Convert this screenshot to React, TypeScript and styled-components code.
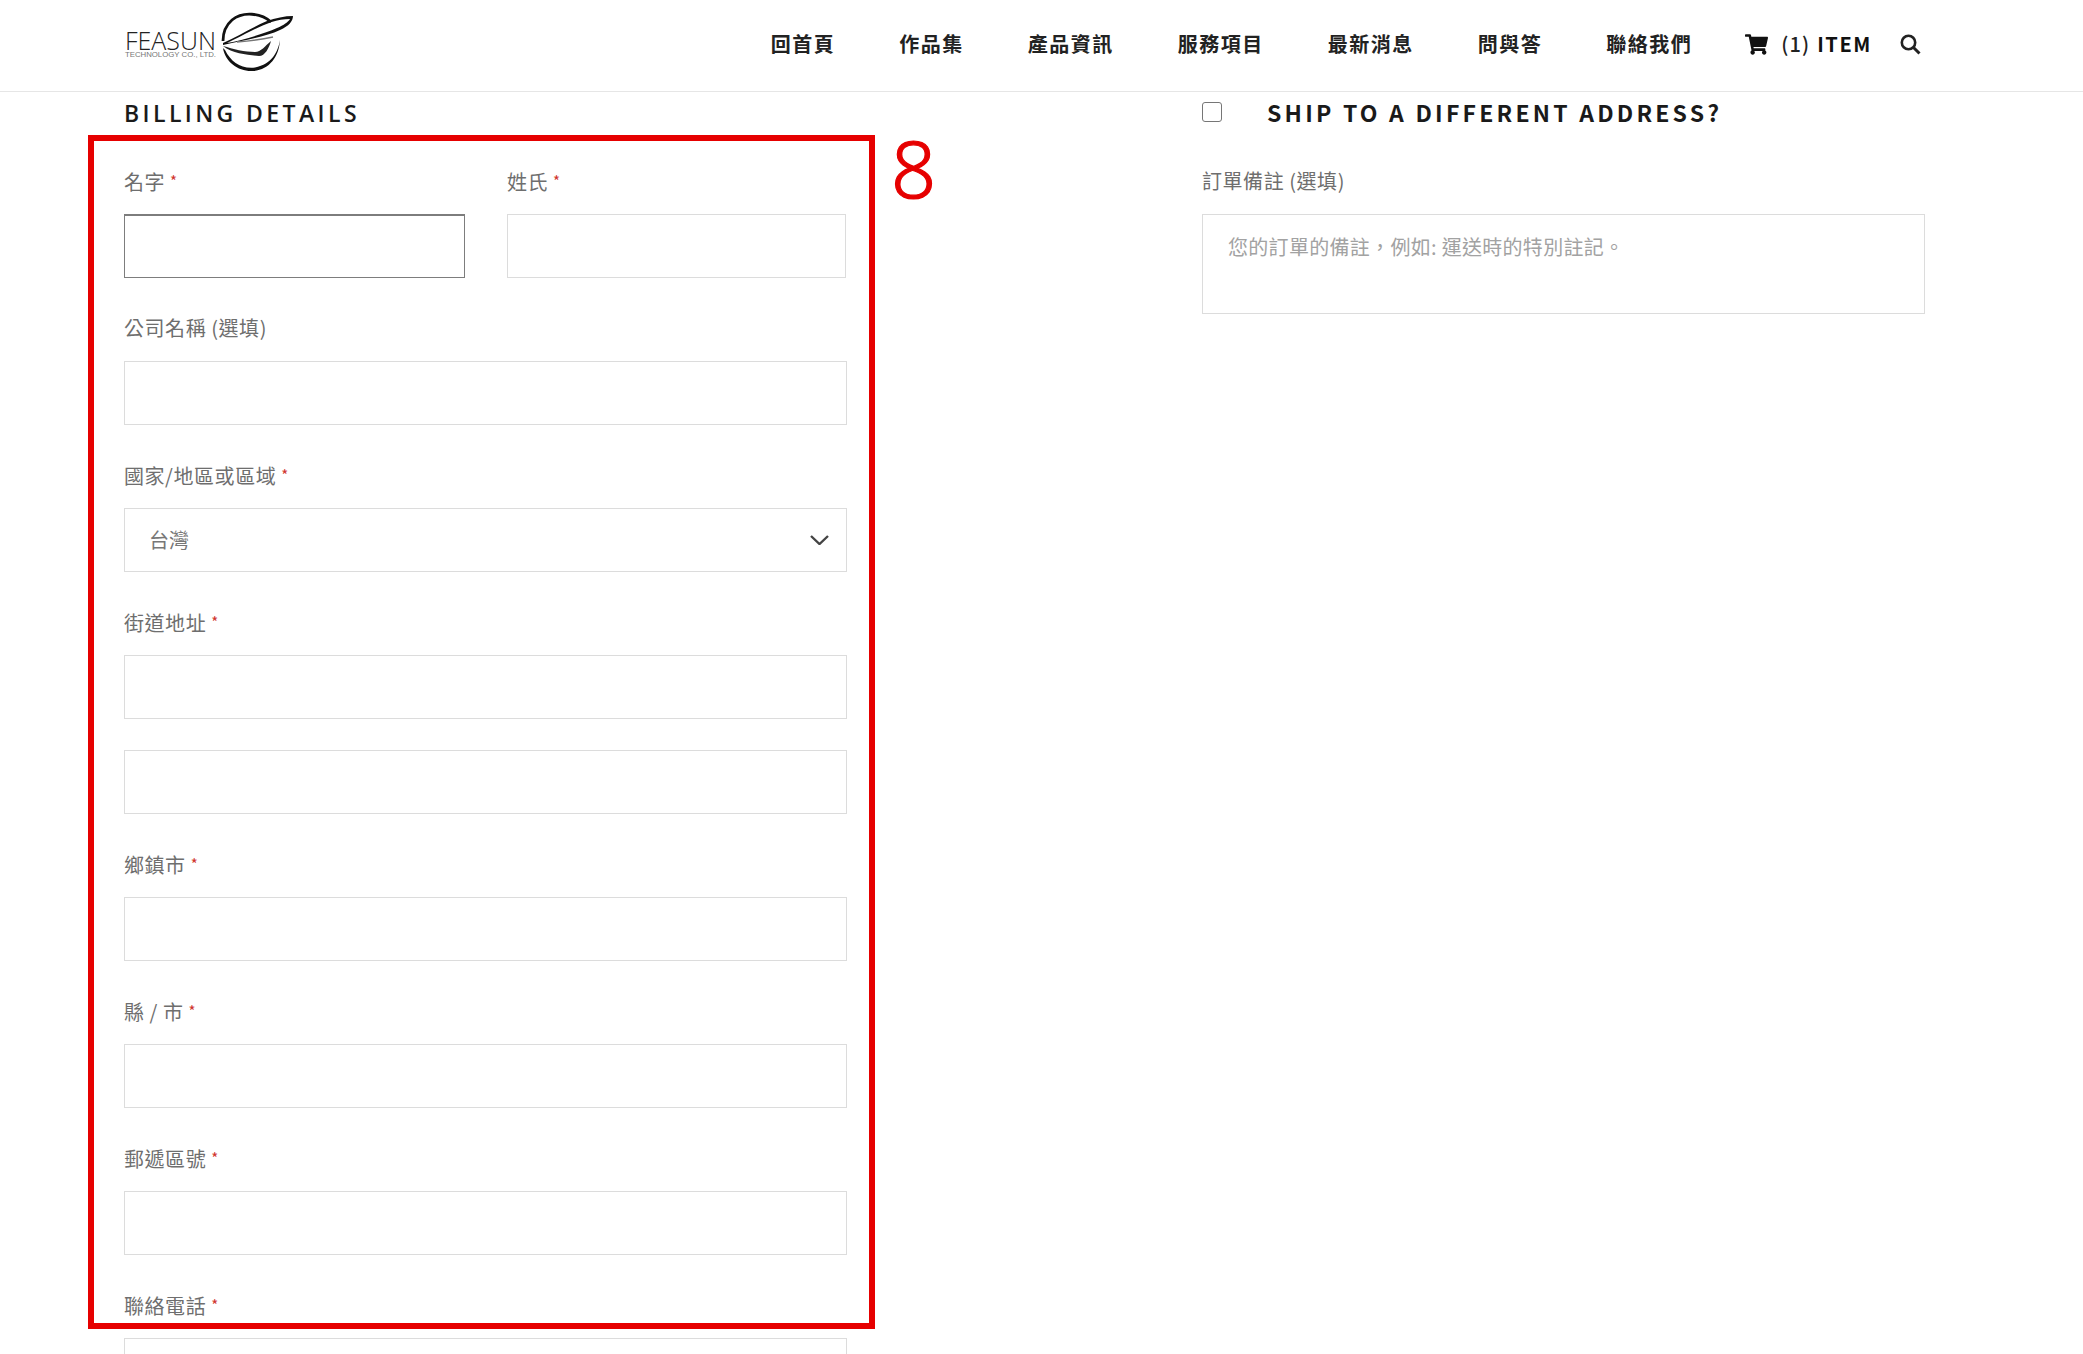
import React from "react";
import styled, { createGlobalStyle } from "styled-components";
import { FaShoppingCart } from "react-icons/fa";

const Global = createGlobalStyle`
  html, body { margin: 0; padding: 0; height: 100%; overflow: hidden; background: #fff; }
  * { box-sizing: border-box; }
  body { font-family: "Noto Sans CJK TC", "Noto Sans", sans-serif; }
`;

const Page = styled.div`
  position: relative;
  height: 1354px;
  overflow: hidden;
  background: #fff;
`;

const Header = styled.header`
  height: 92px;
  border-bottom: 1px solid #e6e6e6;
  padding: 0 162px 0 124px;
  display: flex;
  align-items: center;
  justify-content: space-between;
`;

const LogoSvg = styled.svg`
  display: block;
  width: 170px;
  height: 62px;
  margin-top: -5px;
`;

const Nav = styled.nav`
  display: flex;
  align-items: center;
  gap: 64px;
  margin-top: -3px;
`;

const NavLink = styled.a`
  font-size: 20px;
  line-height: 28px;
  font-weight: 700;
  letter-spacing: 1.5px;
  color: #222;
  white-space: nowrap;
`;

const Cart = styled.div`
  display: flex;
  align-items: center;
  gap: 13px;
  margin-left: -11px;
  color: #111;
  font-size: 20px;
  line-height: 28px;
  white-space: nowrap;
`;

const CartCount = styled.span`
  letter-spacing: 1.2px;
  color: #222;
  font-weight: 500;
  b { font-weight: 700; color: #111; letter-spacing: 1.6px; margin-left: 1px; }
`;

const SearchIcon = styled.svg`
  display: block;
  width: 21px;
  height: 21px;
  margin-left: -36px;
`;

const Columns = styled.main`
  display: grid;
  grid-template-columns: 722.5px 722.5px;
  column-gap: 355.5px;
  padding-left: 124px;
`;

const Heading = styled.h3`
  margin: 0 0 32px;
  height: 44px;
  font-family: "Open Sans", "Noto Sans", sans-serif;
  font-size: 23px;
  line-height: 42px;
  font-weight: 600;
  letter-spacing: 3.4px;
  color: #1a1a1a;
`;

const ShipHeading = styled(Heading)`
  display: flex;
  align-items: flex-start;
  font-family: "Noto Sans CJK TC", sans-serif;
  font-size: 23px;
  line-height: 40px;
  font-weight: 700;
  letter-spacing: 3.2px;
`;

const ShipBox = styled.input`
  appearance: none;
  width: 20px;
  height: 20px;
  margin: 10px 45px 0 0;
  flex: none;
  border: 1px solid #767676;
  border-radius: 3px;
  background: #fff;
`;

const Row = styled.div`
  display: grid;
  grid-template-columns: 341px 339px;
  column-gap: 42px;
`;

const Field = styled.div`
  margin-bottom: 37px;
`;

const Label = styled.label`
  display: block;
  height: 28px;
  margin-bottom: 18px;
  font-size: 20px;
  line-height: 26px;
  letter-spacing: 0.55px;
  color: #6e6e6e;
  white-space: nowrap;
`;

const Star = styled.span`
  margin-left: 5px;
  font-size: 15px;
  vertical-align: 3px;
  color: #d0342c;
`;

const TextInput = styled.input<{ $focused?: boolean }>`
  display: block;
  width: 100%;
  height: 64px;
  padding: 0 25px;
  border: 1px solid ${(p) => (p.$focused ? "#7d7d7d" : "#dcdcdc")};
  border-width: ${(p) => (p.$focused ? "2px 1px 1px" : "1px")};
  border-radius: 0;
  outline: none;
  background: #fff;
  font: inherit;
`;

const SecondLine = styled(TextInput)`
  margin-top: 31px;
`;

const SelectWrap = styled.div`
  position: relative;
`;

const Select = styled.select`
  display: block;
  width: 100%;
  height: 64px;
  padding: 0 24px 2px;
  appearance: none;
  border: 1px solid #dcdcdc;
  border-radius: 0;
  background: #fff;
  font-family: inherit;
  font-size: 20px;
  color: #777;
`;

const Chevron = styled.svg`
  position: absolute;
  right: 18px;
  top: 27px;
  width: 19px;
  height: 10px;
  pointer-events: none;
`;

const NotesArea = styled.textarea`
  display: block;
  width: 100%;
  height: 100px;
  padding: 18px 25px;
  border: 1px solid #dcdcdc;
  border-radius: 0;
  outline: none;
  resize: none;
  font-family: inherit;
  font-size: 20px;
  line-height: 28px;
  letter-spacing: 0.3px;
  &::placeholder { color: #a2a2a2; opacity: 1; }
`;

const Annotation = styled.div`
  position: absolute;
  left: 88px;
  top: 135px;
  width: 787px;
  height: 1194px;
  border: 6.5px solid #e60000;
  pointer-events: none;
`;

const AnnotationNumber = styled.span`
  position: absolute;
  left: 891px;
  top: 122px;
  font-family: "Noto Sans", sans-serif;
  font-weight: 300;
  font-size: 79px;
  line-height: 92px;
  color: #e60000;
  -webkit-text-stroke: 1.2px #e60000;
`;

function Req({ children }: { children: React.ReactNode }) {
  return (
    <Label>
      {children}
      <Star>*</Star>
    </Label>
  );
}

function Logo() {
  return (
    <LogoSvg viewBox="-1 0 170 62" aria-label="FEASUN">
      <text x="0" y="38" fontFamily="Open Sans, sans-serif" fontWeight="300" fontSize="25" textLength="91" lengthAdjust="spacingAndGlyphs" fill="#222">FEASUN</text>
      <text x="0" y="44.5" fontFamily="Liberation Sans, sans-serif" fontSize="6.5" textLength="91" lengthAdjust="spacingAndGlyphs" fill="#777">TECHNOLOGY CO., LTD.</text>
      <path d="M146 10 C136 1 118 -1 107 8 C100 14 98 22 98 29" fill="none" stroke="#111" strokeWidth="2.8" />
      <path d="M98 36 C100 50 114 60 128 59 C144 58 154 45 155 28 C153 40 147 52 130 55.5 C116 57 106 50 100 38 Z" fill="#111" />
      <path d="M98 31 C112 25 124 17 142 9 C150 6 160 4 168 4 C168 9 164 14 155 18 C140 25 116 29 98 33 Z M102 31 C118 28 138 22 152 16 C159 13 163 10 165 7 C152 7 140 12 128 18 C118 23 110 27 102 31 Z" fill="#111" fillRule="evenodd" />
      <path d="M98 34 C108 42 124 43 134 44 C140 44 144 36 146 29 C140 34 136 40 130 40 C120 40 108 37 98 34 Z" fill="#222" />
      <path d="M112 30 C124 29 134 28 148 25" fill="none" stroke="#777" strokeWidth="1.4" />
    </LogoSvg>
  );
}

export default function App() {
  return (
    <Page>
      <Global />
      <Header>
        <Logo />
        <Nav>
          <NavLink>回首頁</NavLink>
          <NavLink>作品集</NavLink>
          <NavLink>產品資訊</NavLink>
          <NavLink>服務項目</NavLink>
          <NavLink>最新消息</NavLink>
          <NavLink>問與答</NavLink>
          <NavLink>聯絡我們</NavLink>
          <Cart>
            <FaShoppingCart size={23} />
            <CartCount>
              (1) <b>ITEM</b>
            </CartCount>
          </Cart>
          <SearchIcon viewBox="0 0 21 21" aria-label="search">
            <circle cx="8.5" cy="8.5" r="6.7" fill="none" stroke="#222" strokeWidth="2.6" />
            <path d="M13.5 13.5 L19.5 19.5" fill="none" stroke="#222" strokeWidth="3" />
          </SearchIcon>
        </Nav>
      </Header>
      <Columns>
        <section>
          <Heading>BILLING DETAILS</Heading>
          <Row>
            <Field>
              <Req>名字</Req>
              <TextInput $focused />
            </Field>
            <Field>
              <Req>姓氏</Req>
              <TextInput />
            </Field>
          </Row>
          <Field>
            <Label>公司名稱 (選填)</Label>
            <TextInput />
          </Field>
          <Field>
            <Req>國家/地區或區域</Req>
            <SelectWrap>
              <Select defaultValue="tw">
                <option value="tw">台灣</option>
              </Select>
              <Chevron viewBox="0 0 19 10">
                <path d="M1 1 L9.5 9 L18 1" fill="none" stroke="#444" strokeWidth="2.4" />
              </Chevron>
            </SelectWrap>
          </Field>
          <Field>
            <Req>街道地址</Req>
            <TextInput />
            <SecondLine />
          </Field>
          <Field>
            <Req>鄉鎮市</Req>
            <TextInput />
          </Field>
          <Field>
            <Req>縣 / 市</Req>
            <TextInput />
          </Field>
          <Field>
            <Req>郵遞區號</Req>
            <TextInput />
          </Field>
          <Field>
            <Req>聯絡電話</Req>
            <TextInput />
          </Field>
        </section>
        <section>
          <ShipHeading>
            <ShipBox type="checkbox" />
            SHIP TO A DIFFERENT ADDRESS?
          </ShipHeading>
          <Field>
            <Label>訂單備註 (選填)</Label>
            <NotesArea placeholder="您的訂單的備註，例如: 運送時的特別註記。" />
          </Field>
        </section>
      </Columns>
      <Annotation />
      <AnnotationNumber>8</AnnotationNumber>
    </Page>
  );
}
